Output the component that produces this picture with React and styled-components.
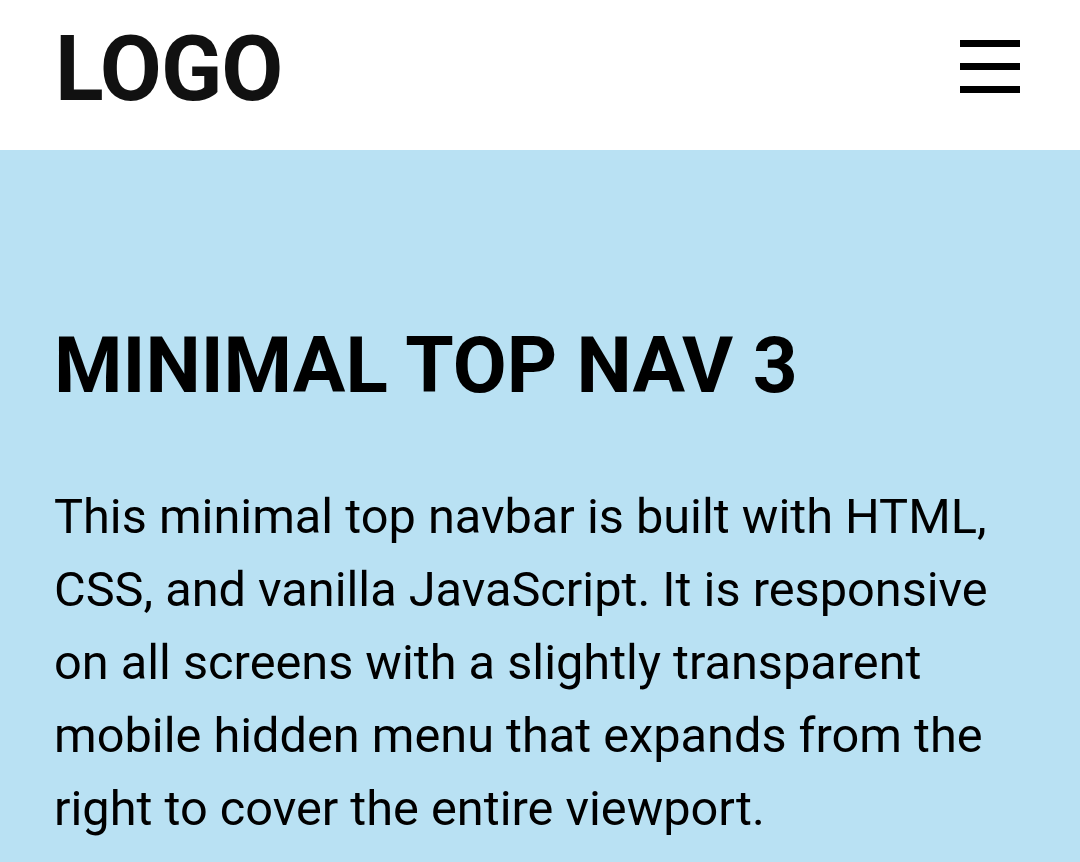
import React from 'react';
import styled, { createGlobalStyle } from 'styled-components';

const GlobalStyle = createGlobalStyle`
  html, body {
    margin: 0;
    padding: 0;
  }
  body {
    font-family: Roboto, "Liberation Sans", sans-serif;
    background: #b9e1f3;
  }
`;

const Header = styled.header`
  height: 150px;
  background: #ffffff;
  display: flex;
  align-items: center;
  justify-content: space-between;
  padding: 0 60px 17px 55px;
  box-sizing: border-box;
`;

const Logo = styled.div`
  font-size: 90px;
  font-weight: 700;
  line-height: 1;
  color: #111111;
  padding-top: 6px;
  letter-spacing: -1px;
`;

const MenuButton = styled.button`
  width: 60px;
  height: 53px;
  padding: 0;
  border: none;
  background: none;
  display: flex;
  flex-direction: column;
  justify-content: space-between;
  cursor: pointer;
`;

const Bar = styled.span`
  display: block;
  width: 60px;
  height: 7px;
  background: #000000;
`;

const Main = styled.main`
  padding: 167px 55px 40px 54px;
  color: #000000;
`;

const Title = styled.h1`
  margin: 0 0 67px;
  font-size: 78.3px;
  line-height: 96px;
  font-weight: 700;
`;

const Text = styled.p`
  margin: 0;
  font-size: 48.7px;
  line-height: 73px;
  max-width: 970px;
`;

export default function App() {
  return (
    <>
      <GlobalStyle />
      <Header>
        <Logo>LOGO</Logo>
        <MenuButton aria-label="Menu">
          <Bar />
          <Bar />
          <Bar />
        </MenuButton>
      </Header>
      <Main>
        <Title>MINIMAL TOP NAV 3</Title>
        <Text>
          This minimal top navbar is built with HTML, CSS, and vanilla JavaScript. It is
          responsive on all screens with a slightly transparent mobile hidden menu that
          expands from the right to cover the entire viewport.
        </Text>
      </Main>
    </>
  );
}
